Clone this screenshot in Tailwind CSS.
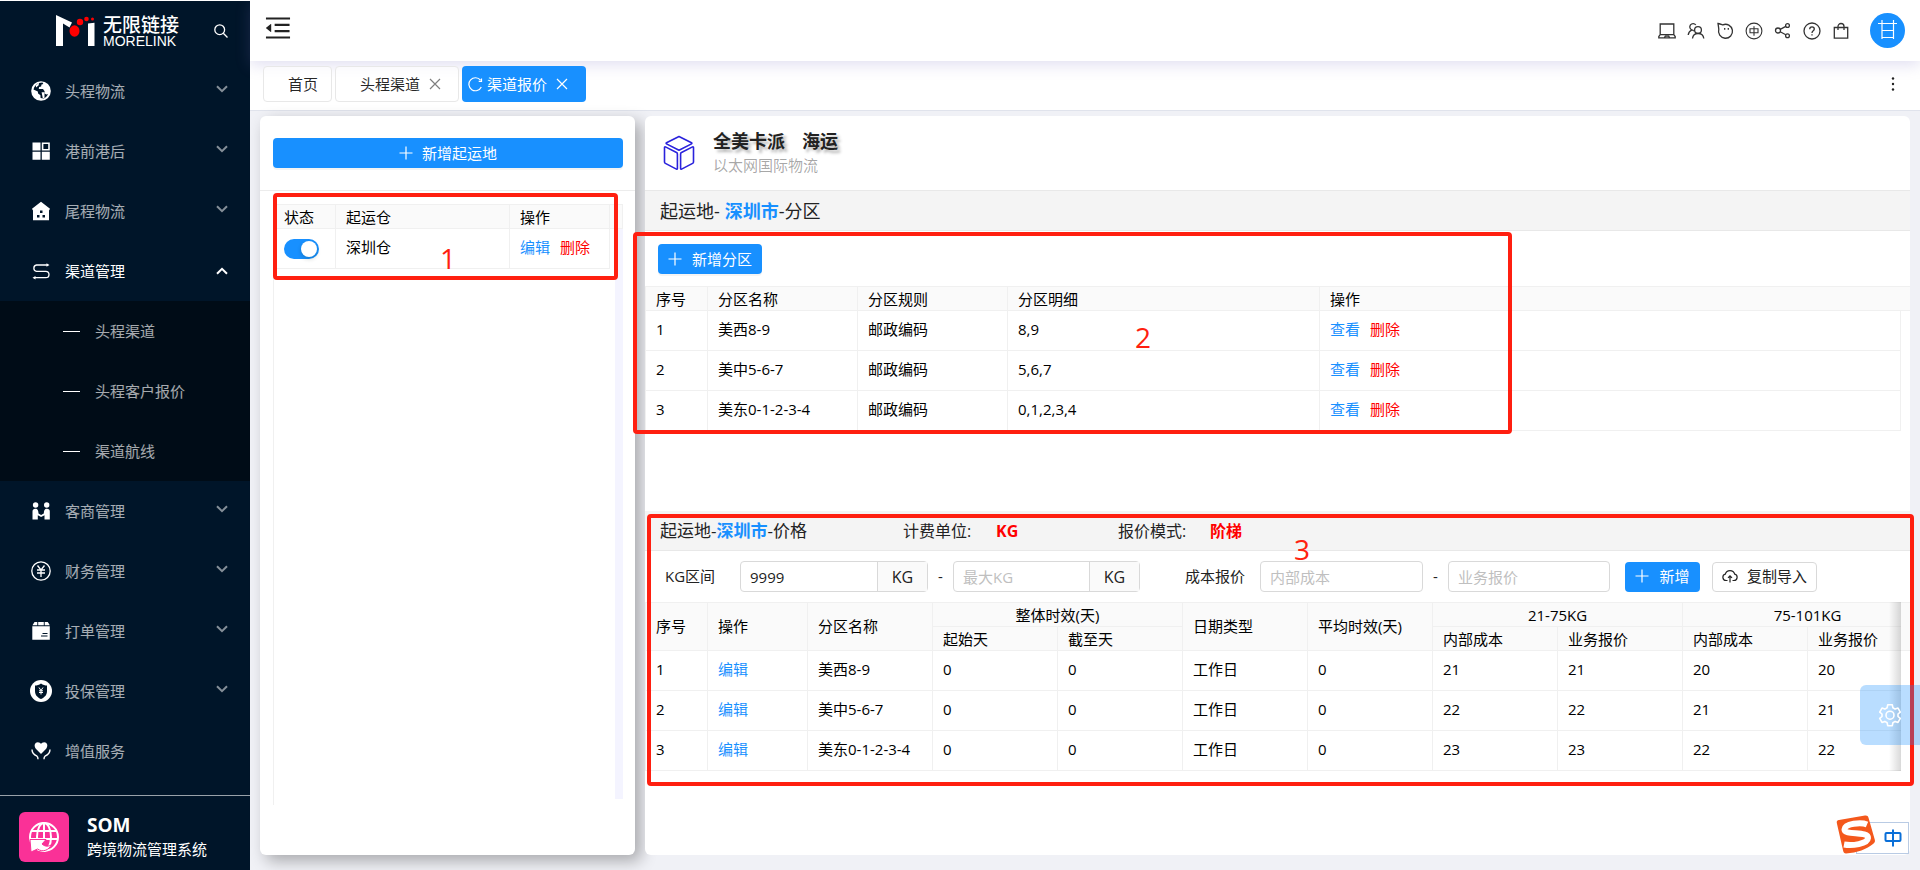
<!DOCTYPE html>
<html lang="zh-CN">
<head>
    <meta charset="UTF-8">
    <meta name="viewport" content="width=device-width, initial-scale=1.0">
    <title>渠道报价 - SOM 跨境物流管理系统</title>
    <script src="https://cdn.jsdelivr.net/npm/@tailwindcss/browser@4"></script>
</head>
<body class="min-h-screen flex bg-[#f0f1f6] text-black/85 text-[15px] leading-6 font-['Open_Sans','Noto_Sans_CJK_SC',sans-serif] overflow-hidden">
    <!-- Shared icons -->
    <svg class="hidden">
        <symbol id="down" viewBox="0 0 12 8"><path d="M1 1.2l5 5 5-5" fill="none" stroke="currentColor" stroke-width="2"/></symbol>
        <symbol id="close" viewBox="0 0 12 12"><path d="M1 1l10 10M11 1L1 11" fill="none" stroke="currentColor" stroke-width="1.2"/></symbol>
        <symbol id="plus" viewBox="0 0 14 14"><path d="M7 .5v13M.5 7h13" fill="none" stroke="currentColor" stroke-width="1.2"/></symbol>
    </svg>

    <!-- Sidebar -->
    <aside class="w-[250px] shrink-0 bg-[#001529] border-t border-white flex flex-col text-white/65">
        <div class="h-[60px] flex items-center pl-[55px] pr-[22px]">
            <svg class="w-10 h-8 shrink-0" viewBox="0 0 40 32">
                <path d="M1 0l16 7.5-2.5 5L8 8.5V31H1zM33 8.5l6.500-.8V31H33z" fill="#fff"/>
                <ellipse cx="19.500" cy="16" rx="5" ry="5.800" fill="#f00"/>
                <circle cx="25" cy="7" r="3.200" fill="#f00"/>
                <circle cx="31.500" cy="4" r="2.300" fill="#f00"/>
                <circle cx="37.500" cy="4" r="1.500" fill="#f00"/>
            </svg>
            <div class="ml-2 text-white flex flex-col">
                <span class="text-[19px] leading-5 font-medium">无限链接</span>
                <span class="text-[14px] leading-3 font-medium font-['Liberation_Sans',sans-serif]">MORELINK</span>
            </div>
            <button class="ml-auto text-white" aria-label="搜索">
                <svg class="w-[14px] h-[14px]" viewBox="0 0 14 14" fill="none" stroke="currentColor" stroke-width="1.300"><circle cx="5.700" cy="5.700" r="4.900"/><path d="M9.300 9.300l4.200 4.200"/></svg>
            </button>
        </div>

        <nav class="text-[15px]">
            <a href="#" class="h-[60px] flex items-center pl-[31px] pr-[22px]">
                <svg class="w-5 h-5 mr-[14px]" viewBox="0 0 20 20"><circle cx="10" cy="10" r="9.800" fill="#fff"/><path d="M8 2l3.500-.6.800 1.600-1.800.6-.4 1.900-2 .6-.3 1.900 4.200.1 1.600 2.200-.1 2.300 2 .9 1.500-.6c-1 2.500-2.800 4-4.500 4.600L9.600 17l-.2-2.700-2.300-1.700-.3-2L2.500 8.500C3.200 5.400 5.300 3 8 2z" fill="#001529"/><path d="M4.800 4.200L8.300 1.500 7.500 4.500 5 6.500zM10.600 11.300h2.900v5.700l-1.700.3z" fill="#fff"/></svg>
                头程物流
                <svg class="w-3 h-2 ml-auto -mt-1 opacity-80"><use href="#down"/></svg>
            </a>
            <a href="#" class="h-[60px] flex items-center pl-[31px] pr-[22px]">
                <svg class="w-5 h-5 mr-[14px]" viewBox="0 0 20 20" fill="#fff"><path d="M1.500 1.500h8v8h-8zM1.500 10.800h8v8h-8zM10.800 10.800h8v8h-8zM10.800 1.500h8v8h-8zm1.600 1.600v4.800h4.800V3.100z" fill-rule="evenodd"/></svg>
                港前港后
                <svg class="w-3 h-2 ml-auto -mt-1 opacity-80"><use href="#down"/></svg>
            </a>
            <a href="#" class="h-[60px] flex items-center pl-[31px] pr-[22px]">
                <svg class="w-5 h-5 mr-[14px]" viewBox="0 0 20 20"><path d="M10 .8l9 7-.8 1.500H18v9.900H2V9.300h-.2L1 7.800z" fill="#fff"/><path d="M9 9.500h2.500V12H9zM6 14h2.500v2.500H6zM11.500 14H14v2.500h-2.500z" fill="#001529"/></svg>
                尾程物流
                <svg class="w-3 h-2 ml-auto -mt-1 opacity-80"><use href="#down"/></svg>
            </a>
            <a href="#" class="h-[60px] flex items-center pl-[31px] pr-[22px] text-white">
                <svg class="w-5 h-5 mr-[14px]" viewBox="0 0 20 20" fill="none" stroke="#fff" stroke-width="1.300"><path d="M16.500 4H5.500a3.200 3.200 0 000 6.300h9.300a3.200 3.200 0 010 6.400H3.500"/><path d="M15.500 2.200l3 1.800-3 1.800zM4.500 14.900l-3 1.800 3 1.800z" fill="#fff" stroke="none"/></svg>
                渠道管理
                <svg class="w-3 h-2 ml-auto rotate-180"><use href="#down"/></svg>
            </a>
            <div class="bg-[#000c17]">
                <a href="#" class="h-[60px] flex items-center pl-[63px]"><span class="w-[17px] h-px bg-white mr-[15px]"></span>头程渠道</a>
                <a href="#" class="h-[60px] flex items-center pl-[63px]"><span class="w-[17px] h-px bg-white mr-[15px]"></span>头程客户报价</a>
                <a href="#" class="h-[60px] flex items-center pl-[63px]"><span class="w-[17px] h-px bg-white mr-[15px]"></span>渠道航线</a>
            </div>
            <a href="#" class="h-[60px] flex items-center pl-[31px] pr-[22px]">
                <svg class="w-5 h-5 mr-[14px]" viewBox="0 0 20 20" fill="#fff"><circle cx="4.600" cy="4" r="2.700"/><circle cx="15.700" cy="4" r="2.700"/><path d="M1.500 18.500v-8Q1.500 7.800 4.500 7.800c2.200 0 2.900 2 3 4.700l2.600 1.600 2.700-1.600c.1-2.700.8-4.700 3-4.700q3 0 3 2.700v8h-5.300v-4.200l-3.400 1.700-3.300-1.700v4.200z"/></svg>
                客商管理
                <svg class="w-3 h-2 ml-auto -mt-1 opacity-80"><use href="#down"/></svg>
            </a>
            <a href="#" class="h-[60px] flex items-center pl-[31px] pr-[22px]">
                <svg class="w-5 h-5 mr-[14px]" viewBox="0 0 20 20" fill="none" stroke="#fff" stroke-width="1.300"><circle cx="10" cy="10" r="9.200"/><path d="M6.500 4.500L10 9l3.500-4.500M10 9v7M6 9h8M6 12h8"/></svg>
                财务管理
                <svg class="w-3 h-2 ml-auto -mt-1 opacity-80"><use href="#down"/></svg>
            </a>
            <a href="#" class="h-[60px] flex items-center pl-[31px] pr-[22px]">
                <svg class="w-5 h-5 mr-[14px]" viewBox="0 0 20 20"><path d="M3.500 1h2.800v3.300H1.500zM7.200 1h5.600v3.300H7.200zM13.700 1h3.100l2 3.300h-5.100zM1.300 5.200h17.500v13.600H1.300z" fill="#fff"/><path d="M11.500 12.500h5M10 15h6.500" stroke="#001529" stroke-width="1.100"/></svg>
                打单管理
                <svg class="w-3 h-2 ml-auto -mt-1 opacity-80"><use href="#down"/></svg>
            </a>
            <a href="#" class="h-[60px] flex items-center pl-[30px] pr-[22px]">
                <svg class="w-[22px] h-[22px] mr-[13px]" viewBox="0 0 22 22"><circle cx="11" cy="11" r="11" fill="#fff"/><path d="M11 3.500c2 1.400 4 2 6 2v5.500c0 4-2.500 6.500-6 8-3.500-1.500-6-4-6-8V5.500c2 0 4-.6 6-2z" fill="#001529"/><path d="M9 7.500l2 3 2-3M11 10.500v4M9 10.800h4M9 12.500h4" fill="none" stroke="#fff" stroke-width="1"/></svg>
                投保管理
                <svg class="w-3 h-2 ml-auto -mt-1 opacity-80"><use href="#down"/></svg>
            </a>
            <a href="#" class="h-[60px] flex items-center pl-[31px] pr-[22px]">
                <svg class="w-5 h-5 mr-[14px]" viewBox="0 0 20 20"><path d="M10 13L4.800 7.700C2.500 4.500 4 1.300 6.800 1.300c1.500 0 2.600.8 3.200 1.800.6-1 1.700-1.800 3.200-1.800 2.800 0 4.300 3.200 2 6.400z" fill="#fff"/><path d="M1 8.500c0 3 1.500 5 5 6.700.8.600 1 1.500 1 3M19 8.500c0 3-1.500 5-5 6.700-.8.600-1 1.500-1 3" fill="none" stroke="#fff" stroke-width="1.400"/></svg>
                增值服务
            </a>
        </nav>

        <div class="mt-auto h-[75px] border-t border-white/60 flex items-center pl-[19px] pt-2 text-white">
            <svg class="w-[50px] h-[50px] shrink-0" viewBox="0 0 50 50">
                <rect width="50" height="50" rx="6" fill="#fa3197"/>
                <g fill="none" stroke="#fff" stroke-width="2"><circle cx="25" cy="25" r="14"/><ellipse cx="25" cy="25" rx="7" ry="14"/><path d="M25 11v16M12.500 19h25M11 27h28"/></g>
                <path d="M11 27.500h16l-4 4.500c3 2.500 5.500 3 9 1-1.500 4.500-8 8-13.500 4L12 40z" fill="#fff" stroke="#fa3197" stroke-width="1"/>
            </svg>
            <div class="ml-[18px] flex flex-col">
                <span class="text-[19px] leading-6 font-bold">SOM</span>
                <span class="text-[15px] leading-6">跨境物流管理系统</span>
            </div>
        </div>
    </aside>

    <div class="flex-1 min-w-0 flex flex-col">
        <!-- Top bar -->
        <header class="h-[61px] shrink-0 bg-white flex items-center pl-[15px] pr-[15px] relative z-10 shadow-[0_4px_14px_rgba(120,110,190,0.22)]">
            <button aria-label="收起菜单" class="-mt-[5px]">
                <svg class="w-[26px] h-[26px]" viewBox="90 80 844 864" fill="#222"><path d="M408 442h480c4.400 0 8-3.600 8-8v-56c0-4.400-3.600-8-8-8H408c-4.400 0-8 3.600-8 8v56c0 4.400 3.600 8 8 8zm-8 204c0 4.400 3.600 8 8 8h480c4.400 0 8-3.600 8-8v-56c0-4.400-3.600-8-8-8H408c-4.400 0-8 3.600-8 8v56zm504-486H120c-4.400 0-8 3.600-8 8v56c0 4.400 3.600 8 8 8h784c4.400 0 8-3.600 8-8v-56c0-4.400-3.600-8-8-8zm0 632H120c-4.400 0-8 3.600-8 8v56c0 4.400 3.600 8 8 8h784c4.400 0 8-3.600 8-8v-56c0-4.400-3.600-8-8-8zM115.400 518.900L271.700 642c5.800 4.600 14.400.5 14.400-6.900V388.900c0-7.400-8.500-11.500-14.400-6.900L115.400 505.100a8.740 8.740 0 000 13.800z"/></svg>
            </button>
            <div class="ml-auto flex items-center gap-[11px] text-[#333]">
                <svg class="w-[18px] h-[18px]" viewBox="0 0 18 18" fill="none" stroke="currentColor" stroke-width="1.300"><path d="M2.200 12.500V2h13.600v10.500M.8 15.800v-1.300l1.400-1.800h13.600l1.400 1.800v1.300zM6.500 15.500l.8-1.400h3.400l.8 1.400"/></svg>
                <svg class="w-[18px] h-[18px]" viewBox="0 0 18 18" fill="none" stroke="currentColor" stroke-width="1.300"><circle cx="11" cy="8" r="3.400"/><path d="M5.500 16.500c.3-2.800 2-5 5.500-5s5.500 2.200 5.800 5M8.800 3A3.300 3.300 0 105 8C2.800 8.800 1.500 10.500 1.200 13M5 8l2.200.8"/></svg>
                <svg class="w-[18px] h-[18px]" viewBox="0 0 18 18" fill="none" stroke="currentColor" stroke-width="1.300"><path d="M2 1.500c2.500.5 3.500.9 4.800 1.300A7 7 0 112.800 7.200C2.600 5 2.300 3.500 2 1.500z"/><path d="M8.700 6v1.800M12.300 6v1.800"/></svg>
                <svg class="w-[18px] h-[18px]" viewBox="0 0 18 18" fill="none" stroke="currentColor" stroke-width="1.100"><circle cx="9" cy="9" r="7.900"/><path d="M5 6.800h8v4H5zM9 4.200v9.600"/></svg>
                <svg class="w-[18px] h-[18px]" viewBox="0 0 18 18" fill="none" stroke="currentColor" stroke-width="1.300"><circle cx="4" cy="8.500" r="2.500"/><circle cx="13.500" cy="3.500" r="1.900"/><circle cx="13.500" cy="13.800" r="1.900"/><path d="M6.200 7.400l5.600-3M6.200 9.800l5.600 3"/></svg>
                <svg class="w-[18px] h-[18px]" viewBox="0 0 18 18" fill="none" stroke="currentColor" stroke-width="1.300"><circle cx="9" cy="9" r="8"/><path d="M6.700 7.200C6.700 5.600 7.700 4.900 9 4.900s2.300.9 2.300 2.200C11.300 8.900 9 8.800 9 11M9 12.200v1.300"/></svg>
                <svg class="w-[18px] h-[18px]" viewBox="0 0 18 18" fill="none" stroke="currentColor" stroke-width="1.300"><path d="M2.300 5.500h13.400v10.700H2.300zM6 8V4.500a3 3 0 016 0V8"/></svg>
            </div>
            <svg class="ml-5 w-[35px] h-[35px]" viewBox="0 0 35 35"><circle cx="17.500" cy="17.500" r="17.500" fill="#1890ff"/><path d="M12 7v19M23.500 7v19M8 10.500h19M12 17.500h11.500M12 24.500h11.500" fill="none" stroke="#fff" stroke-width="1.200"/></svg>
        </header>

        <!-- Page tabs -->
        <div class="h-[50px] shrink-0 bg-white border-b border-[#e0e3ec] flex items-center gap-[3px] pl-[13px] pr-5 pb-[3px]">
            <a href="#" class="h-9 w-[69px] relative z-10 bg-white/60 border border-[#e8e8e8] rounded-sm flex items-center pl-6">首页</a>
            <a href="#" class="h-9 w-[124px] relative z-10 bg-white/60 border border-[#e8e8e8] rounded-sm flex items-center pl-6">头程渠道
                <svg class="w-3 h-3 ml-[9px] text-black/50"><use href="#close"/></svg>
            </a>
            <a href="#" class="h-9 w-[124px] relative z-10 bg-[#1890ff] text-white rounded-sm flex items-center pl-[6px]">
                <svg class="w-[15px] h-[15px] mr-1" viewBox="0 0 15 15" fill="none" stroke="currentColor" stroke-width="1.200"><path d="M12.500 3.200A6.500 6.500 0 1013.300 10M13.500 1.500v2.800h-2.800"/></svg>
                渠道报价
                <svg class="w-3 h-3 ml-[9px]"><use href="#close"/></svg>
            </a>
            <button class="ml-auto" aria-label="更多">
                <svg class="w-[14px] h-[14px]" viewBox="0 0 14 14" fill="#222"><circle cx="7" cy="1.500" r="1.200"/><circle cx="7" cy="7" r="1.200"/><circle cx="7" cy="12.500" r="1.200"/></svg>
            </button>
        </div>

        <main class="flex-1 flex gap-[10px] pl-[10px] pr-[10px] pt-[5px] pb-[15px] text-black">
            <!-- Origins -->
            <section class="w-[375px] shrink-0 relative z-10 bg-white rounded-md flex flex-col shadow-[6px_6px_16px_rgba(0,0,0,0.3)]">
                <div class="h-[75px] border-b border-[#ececec] pl-[13px] pr-3 pt-[22px]">
                    <button class="w-full h-[30px] rounded-sm bg-[#1890ff] text-white flex items-center justify-center gap-[9px] pb-px shadow-[0_2px_0_rgba(0,0,0,0.045)]">
                        <svg class="w-[14px] h-[14px]"><use href="#plus"/></svg>新增起运地
                    </button>
                </div>
                <div class="flex-1 relative mt-[13px] mb-[50px] ml-[13px] mr-3 border-l border-[#f0f0f0]">
                    <div class="absolute right-0 top-[25px] bottom-[6px] w-2 bg-[#f4f4ff]"></div>
                    <table class="w-full table-fixed border-separate border-spacing-0 text-left">
                        <thead class="bg-[#fafafa]">
                            <tr class="h-[25px] leading-[22px]">
                                <th class="w-[62px] pl-[10px] font-normal border-y border-r border-[#f0f0f0]">状态</th>
                                <th class="pl-[10px] font-normal border-y border-r border-[#f0f0f0]">起运仓</th>
                                <th class="w-[100px] pl-[10px] font-normal border-y border-r border-[#f0f0f0]">操作</th>
                                <th class="w-[13px] border-y border-r border-[#f0f0f0]"></th>
                            </tr>
                        </thead>
                        <tbody>
                            <tr class="h-10">
                                <td class="pl-[10px] border-b border-r border-[#f0f0f0]">
                                    <input type="checkbox" checked aria-label="启用深圳仓" class="appearance-none relative block w-[35px] h-5 rounded-full bg-[#1890ff] before:content-[''] before:absolute before:top-[2px] before:right-[2px] before:size-4 before:rounded-full before:bg-white before:shadow-[0_2px_4px_rgba(0,35,11,0.2)]">
                                </td>
                                <td class="pl-[10px] pb-[3px] border-b border-r border-[#f0f0f0]">深圳仓</td>
                                <td class="pl-[10px] pb-[3px] border-b border-r border-[#f0f0f0]"><div class="flex gap-[10px]"><a href="#" class="text-[#1890ff]">编辑</a><a href="#" class="text-[#f00]">删除</a></div></td>
                                <td></td>
                            </tr>
                        </tbody>
                    </table>
                </div>
                <div class="absolute left-[13px] top-[77px] w-[345px] h-[87px] border-4 border-[#ff1f10] rounded-sm pointer-events-none"></div>
                <span class="absolute left-[180px] top-[126px] text-[28px] leading-8 text-[#ff1f10]">1</span>
            </section>

            <!-- Zones and prices -->
            <section class="flex-1 min-w-0 relative z-10 bg-white rounded-md">
                <div class="h-[74px] flex items-center pl-[18px]">
                    <svg class="w-8 h-9 mr-[18px]" viewBox="0 0 32 36" fill="none" stroke="#2a22dc" stroke-width="1.600" stroke-linejoin="round"><path d="M16 1.500l12.500 6.300c.5.300.5.800 0 1.100L16 15.200 3.500 8.900c-.5-.3-.5-.8 0-1.100zM1.500 12.500c0-.6.500-.9 1-.6l11 5.600c.6.300.9.800.9 1.400v14.600c0 .6-.4.900-1 .6l-11-5.700c-.6-.3-.9-.8-.9-1.400zM30.500 12.500c0-.6-.5-.9-1-.6l-11 5.600c-.6.300-.9.800-.9 1.400v14.600c0 .6.400.9 1 .6l11-5.700c.6-.3.9-.8.9-1.400z"/></svg>
                    <div>
                        <h1 class="text-[18px] leading-6 font-bold text-[#222] flex gap-[17px] [text-shadow:3px_3px_3px_rgba(0,0,0,0.3)]"><span>全美卡派</span><span>海运</span></h1>
                        <p class="text-[15px] leading-6 text-black/35">以太网国际物流</p>
                    </div>
                </div>
                <h2 class="h-[41px] bg-[#f4f4f4] border-y border-[#e8e8e8] flex items-center pl-[15px] text-[18px] text-[#222]">起运地-<b class="text-[#1890ff] ml-[5px]">深圳市</b>-分区</h2>

                <div class="relative">
                    <div class="pt-[13px] pb-3 pl-[13px]">
                        <button class="h-[30px] w-[104px] rounded-sm bg-[#1890ff] text-white flex items-center pl-[10px] gap-[10px] pb-px shadow-[0_2px_0_rgba(0,0,0,0.045)]">
                            <svg class="w-[14px] h-[14px]"><use href="#plus"/></svg>新增分区
                        </button>
                    </div>
                    <div class="flex items-start">
                        <table class="flex-1 w-full table-fixed border-separate border-spacing-0 text-left border-l border-[#f0f0f0]">
                            <thead class="bg-[#fafafa]">
                                <tr class="h-[25px] leading-[22px]">
                                    <th class="w-[62px] pl-[10px] font-normal border-y border-r border-[#f0f0f0]">序号</th>
                                    <th class="w-[150px] pl-[10px] font-normal border-y border-r border-[#f0f0f0]">分区名称</th>
                                    <th class="w-[150px] pl-[10px] font-normal border-y border-r border-[#f0f0f0]">分区规则</th>
                                    <th class="w-[312px] pl-[10px] font-normal border-y border-r border-[#f0f0f0]">分区明细</th>
                                    <th class="pl-[10px] font-normal border-y border-[#f0f0f0]">操作</th>
                                </tr>
                            </thead>
                            <tbody id="zoneRows"></tbody>
                        </table>
                        <div class="w-[9px] h-[25px] bg-[#fafafa] border-y border-[#f0f0f0]"></div>
                    </div>
                    <div class="absolute -left-3 top-[1px] w-[879px] h-[202px] border-4 border-[#ff1f10] rounded-sm pointer-events-none"></div>
                    <span class="absolute left-[490px] top-[90px] text-[28px] leading-8 text-[#ff1f10]">2</span>
                </div>

                <div class="relative mt-20">
                    <div class="h-10 bg-[#f4f4f4] border-b border-[#e8e8e8] flex items-center pl-[15px] text-[16px] text-[#222]">
                        <h2 class="w-[243px] text-[17px]">起运地-<b class="text-[#1890ff]">深圳市</b>-价格</h2>
                        <span class="w-[93px]">计费单位:</span><b class="w-[122px] text-[#f00]">KG</b>
                        <span class="w-[92px]">报价模式:</span><b class="text-[#f00]">阶梯</b>
                    </div>
                    <form class="flex items-center pl-5 pt-[10px] pb-[10px] text-[15px] text-[#222]">
                        <label for="minKg" class="w-[75px] pb-[2px]">KG区间</label>
                        <div class="w-[188px] h-[31px] flex border border-[#d9d9d9] rounded-sm">
                            <input id="minKg" value="9999" class="flex-1 min-w-0 px-[9px] outline-none">
                            <span class="w-[50px] bg-[#fafafa] border-l border-[#d9d9d9] flex items-center justify-center text-[16px]">KG</span>
                        </div>
                        <span class="w-[25px] text-center pb-[2px]">-</span>
                        <div class="w-[187px] h-[31px] flex border border-[#d9d9d9] rounded-sm">
                            <input aria-label="最大KG" placeholder="最大KG" class="flex-1 min-w-0 px-[9px] outline-none placeholder:text-[#bfbfbf]">
                            <span class="w-[50px] bg-[#fafafa] border-l border-[#d9d9d9] flex items-center justify-center text-[16px]">KG</span>
                        </div>
                        <label for="innerCost" class="w-[75px] ml-[45px] pb-[2px]">成本报价</label>
                        <input id="innerCost" placeholder="内部成本" class="w-[163px] h-[31px] px-[9px] border border-[#d9d9d9] rounded-sm placeholder:text-[#bfbfbf]">
                        <span class="w-[25px] text-center pb-[2px]">-</span>
                        <input aria-label="业务报价" placeholder="业务报价" class="w-[162px] h-[31px] px-[9px] border border-[#d9d9d9] rounded-sm placeholder:text-[#bfbfbf]">
                        <button type="button" class="ml-[15px] h-[30px] w-[75px] rounded-sm bg-[#1890ff] text-white flex items-center justify-center gap-[10px] pb-[2px]">
                            <svg class="w-[14px] h-[14px]"><use href="#plus"/></svg>新增
                        </button>
                        <button type="button" class="ml-3 h-[30px] w-[105px] rounded-sm border border-[#d9d9d9] flex items-center justify-center gap-[9px] pb-[2px]">
                            <svg class="w-4 h-4" viewBox="0 0 16 16" fill="none" stroke="currentColor" stroke-width="1.200"><path d="M5.500 12.500H4a3.200 3.200 0 01-.7-6.300 4.900 4.900 0 019.400 0 3.200 3.200 0 01-.7 6.300h-1.500M8 14.500V8M6 9.800l2-2 2 2"/></svg>复制导入
                        </button>
                    </form>
                    <div class="flex items-start">
                        <div class="flex-1 min-w-0 overflow-hidden relative border-l border-[#f0f0f0]">
                            <table class="w-[1287px] table-fixed border-separate border-spacing-0 text-left">
                                <colgroup>
                                    <col class="w-[62px]"><col class="w-[100px]"><col span="9" class="w-[125px]">
                                </colgroup>
                                <thead class="bg-[#fafafa] leading-[22px]">
                                    <tr class="h-[25px]">
                                        <th rowspan="2" class="pl-[10px] pb-[2px] font-normal border-y border-r border-[#f0f0f0]">序号</th>
                                        <th rowspan="2" class="pl-[10px] pb-[2px] font-normal border-y border-r border-[#f0f0f0]">操作</th>
                                        <th rowspan="2" class="pl-[10px] pb-[2px] font-normal border-y border-r border-[#f0f0f0]">分区名称</th>
                                        <th colspan="2" class="text-center font-normal border-y border-r border-[#f0f0f0]">整体时效(天)</th>
                                        <th rowspan="2" class="pl-[10px] pb-[2px] font-normal border-y border-r border-[#f0f0f0]">日期类型</th>
                                        <th rowspan="2" class="pl-[10px] pb-[2px] font-normal border-y border-r border-[#f0f0f0]">平均时效(天)</th>
                                        <th colspan="2" class="text-center font-medium border-y border-r border-[#f0f0f0]">21-75KG</th>
                                        <th colspan="2" class="text-center font-medium border-y border-r border-[#f0f0f0]">75-101KG</th>
                                    </tr>
                                    <tr class="h-6">
                                        <th class="pl-[10px] font-normal border-b border-r border-[#f0f0f0]">起始天</th>
                                        <th class="pl-[10px] font-normal border-b border-r border-[#f0f0f0]">截至天</th>
                                        <th class="pl-[10px] font-normal border-b border-r border-[#f0f0f0]">内部成本</th>
                                        <th class="pl-[10px] font-normal border-b border-r border-[#f0f0f0]">业务报价</th>
                                        <th class="pl-[10px] font-normal border-b border-r border-[#f0f0f0]">内部成本</th>
                                        <th class="pl-[10px] font-normal border-b border-r border-[#f0f0f0]">业务报价</th>
                                    </tr>
                                </thead>
                                <tbody id="priceRows"></tbody>
                            </table>
                            <div class="absolute inset-y-0 right-0 w-3 bg-linear-to-r from-transparent to-black/15"></div>
                        </div>
                        <div class="w-[9px] h-[49px] bg-[#fafafa] border-y border-[#f0f0f0]"></div>
                    </div>
                    <div class="absolute left-[2px] -right-1 top-[3px] h-[272px] border-4 border-[#ff1f10] rounded-sm pointer-events-none"></div>
                    <span class="absolute left-[649px] top-[22px] text-[28px] leading-8 text-[#ff1f10]">3</span>
                </div>
            </section>
        </main>
    </div>

    <!-- Settings handle -->
    <button aria-label="设置" class="fixed right-0 top-[685px] z-20 w-[60px] h-[60px] rounded-l-md bg-[#1890ff]/30 flex items-center justify-center">
        <svg class="w-6 h-6" viewBox="0 0 24 24" fill="none" stroke="#fff" stroke-width="1.600" stroke-linejoin="round"><path d="M9.700 1.800h4.600l.6 3 2.200 1.300 2.900-1 2.300 4-2.300 1.900v2.500l2.300 1.900-2.300 4-2.900-1-2.200 1.300-.6 3H9.700l-.6-3-2.200-1.300-2.900 1-2.300-4L4 13.500V11L1.700 9.100l2.300-4 2.900 1 2.200-1.300z"/><circle cx="12" cy="12.200" r="4"/></svg>
    </button>

    <!-- Input method badge -->
    <div class="fixed right-[11px] bottom-4 z-20 flex items-end">
        <svg class="w-10 h-[39px] relative z-10" viewBox="0 0 40 39"><path d="M3 5L29 .6c2-.3 3 .5 3.500 2.200l6.300 22c.5 1.800 0 3-1.800 4.200-6 5-16 9-27 9.400-1.700 0-2.500-.8-2.800-2.300L.8 8C.5 6.300 1.200 5.300 3 5z" fill="#f4581c"/><path d="M31 9.500C25 7 9 8.500 8.500 14.500c-.4 6 24 1.500 23.500 8.500-.5 6-16 8-24 6.500" fill="none" stroke="#fff" stroke-width="6"/></svg>
        <span class="-ml-5 pl-5 w-[53px] h-8 border border-[#b9cbe4] bg-white flex items-center justify-center">
            <svg class="w-[18px] h-[18px]" viewBox="0 0 18 18" fill="none" stroke="#0a6fd8" stroke-width="2"><rect x="1.500" y="4" width="15" height="8" rx="1"/><path d="M9 .5v17"/></svg>
        </span>
    </div>

    <script>
        const zones = [
            ['美西8-9', '8,9'],
            ['美中5-6-7', '5,6,7'],
            ['美东0-1-2-3-4', '0,1,2,3,4']
        ];
        const prices = [[21, 21, 20, 20], [22, 22, 21, 21], [23, 23, 22, 22]];
        const cell = html => `<td class="pl-[10px] pb-[3px] border-b border-r border-[#f0f0f0]">${html}</td>`;

        document.getElementById('zoneRows').innerHTML = zones.map(([name, detail], i) =>
            '<tr class="h-10">' + cell(i + 1) + cell(name) + cell('邮政编码') + cell(detail) +
            cell('<div class="flex gap-[10px]"><a href="#" class="text-[#1890ff]">查看</a><a href="#" class="text-[#f00]">删除</a></div>') + '</tr>'
        ).join('');

        document.getElementById('priceRows').innerHTML = zones.map(([name], i) =>
            '<tr class="h-10">' + [i + 1, '<a href="#" class="text-[#1890ff]">编辑</a>', name, 0, 0, '工作日', 0, ...prices[i]].map(cell).join('') + '</tr>'
        ).join('');
    </script>
</body>
</html>
